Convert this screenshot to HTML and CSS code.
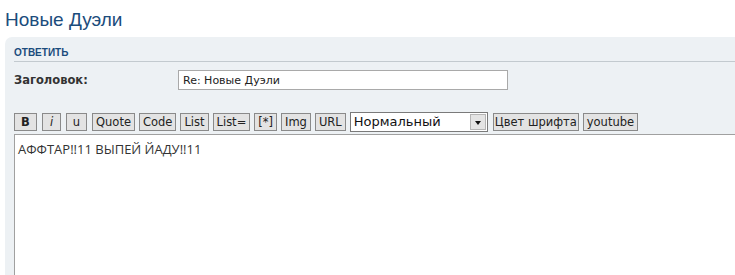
FILE: index.html
```html
<!DOCTYPE html>
<html lang="ru">
<head>
  <meta charset="UTF-8">
  <title>Новые Дуэли</title>
  <link rel="stylesheet" href="styles.css">
</head>
<body>

  <h2 class="topic-title">Новые Дуэли</h2>

  <div class="reply-panel">
    <div class="panel-head">Ответить</div>

    <div class="subject-row">
      <label class="subject-label" for="subject">Заголовок:</label>
      <input class="subject-input" id="subject" type="text" value="Re: Новые Дуэли">
    </div>

    <div class="toolbar">
      <button class="bb-btn bb-bold">B</button>
      <button class="bb-btn bb-italic">i</button>
      <button class="bb-btn bb-under">u</button>
      <button class="bb-btn">Quote</button>
      <button class="bb-btn">Code</button>
      <button class="bb-btn">List</button>
      <button class="bb-btn">List=</button>
      <button class="bb-btn">[*]</button>
      <button class="bb-btn">Img</button>
      <button class="bb-btn">URL</button>
      <div class="size-select">
        <span class="size-value">Нормальный</span>
        <span class="size-arrow"></span>
      </div>
      <button class="bb-btn bb-tight">Цвет шрифта</button>
      <button class="bb-btn">youtube</button>
    </div>

    <textarea class="message">АФФТАР!!11 ВЫПЕЙ ЙАДУ!!11</textarea>
  </div>

</body>
</html>
```

FILE: styles.css
```css
body {
  margin: 0;
  height: 275px;
  font-family: "DejaVu Sans", Verdana, sans-serif;
  background-color: #ffffff;
  overflow: hidden;
}

.topic-title {
  margin: 0;
  padding: 9px 0 0 5px;
  height: 28px;
  font-family: "Liberation Sans", Arial, sans-serif;
  font-size: 19px;
  font-weight: normal;
  color: #1b4c7c;
  line-height: 22px;
}

.reply-panel {
  margin-left: 5px;
  padding-left: 9px;
  background-color: #edf1f4;
  border-top-left-radius: 7px;
  height: 238px;
}

.panel-head {
  height: 25px;
  box-sizing: border-box;
  padding-top: 11px;
  border-bottom: 1px solid #c3cacf;
  font-family: "Liberation Sans", Arial, sans-serif;
  font-size: 10px;
  font-weight: bold;
  text-transform: uppercase;
  color: #1b4c7c;
  line-height: 10px;
}

.subject-row {
  display: flex;
  align-items: flex-start;
  padding-top: 8px;
  height: 49px;
  box-sizing: border-box;
}

.subject-label {
  width: 164px;
  font-size: 11.5px;
  font-weight: bold;
  color: #333333;
  padding-top: 3px;
}

.subject-input {
  width: 330px;
  height: 20px;
  box-sizing: border-box;
  margin: 0;
  border: 1px solid #a9a9a9;
  padding: 0 4px;
  font-family: "DejaVu Sans", Verdana, sans-serif;
  font-size: 11px;
  color: #222222;
  background-color: #ffffff;
}

.toolbar {
  display: flex;
  align-items: center;
  gap: 4px;
  height: 21px;
}

.bb-btn {
  height: 18px;
  margin: 0;
  padding: 0 3px;
  border: 1px solid #8a8a8a;
  background-color: #e3e3e3;
  font-family: "DejaVu Sans", Verdana, sans-serif;
  font-size: 11.5px;
  color: #222222;
  line-height: 16px;
}

.bb-bold {
  width: 23px;
  margin-right: 1px;
  font-weight: bold;
}

.bb-italic {
  width: 19px;
  margin-right: 1px;
  font-style: italic;
}

.bb-under {
  width: 21px;
  margin-right: 1px;
}

.bb-tight {
  padding: 0 1px;
}

.size-select {
  display: flex;
  align-items: center;
  justify-content: space-between;
  width: 138px;
  height: 20px;
  box-sizing: border-box;
  margin-right: 1px;
  border: 1px solid #7a7a7a;
  background-color: #ffffff;
  padding: 0 1px 0 3px;
}

.size-value {
  font-family: "DejaVu Sans", Verdana, sans-serif;
  font-size: 13px;
  color: #111111;
}

.size-arrow {
  width: 16px;
  height: 16px;
  box-sizing: border-box;
  border: 1px solid #b5b5b5;
  background-color: #e4e4e4;
  position: relative;
}

.size-arrow::after {
  content: "";
  position: absolute;
  left: 4px;
  top: 6px;
  border-left: 3px solid transparent;
  border-right: 3px solid transparent;
  border-top: 4px solid #111111;
}

.message {
  display: block;
  margin-top: 2px;
  width: 721px;
  height: 141px;
  box-sizing: border-box;
  border: 1px solid #a0a0a0;
  border-right: none;
  border-bottom: none;
  padding: 5px 3px;
  font-family: "Open Sans", sans-serif;
  font-size: 13px;
  color: #333333;
  resize: none;
}
```
